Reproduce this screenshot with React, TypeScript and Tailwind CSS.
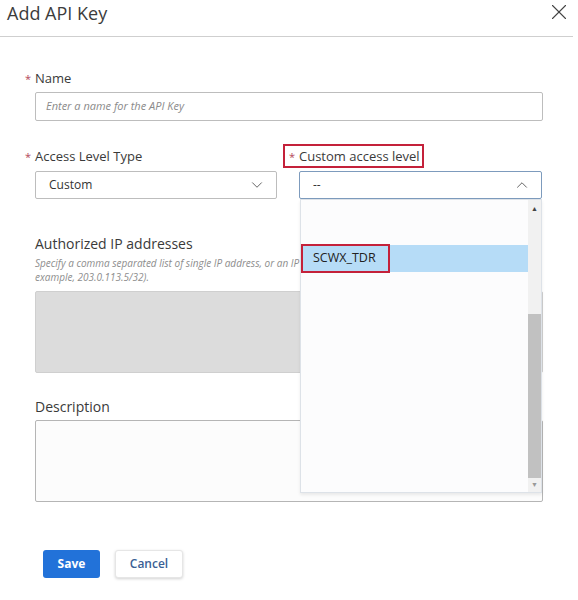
import { ChevronDown, ChevronUp, X } from "lucide-react";

const font = "font-['Open_Sans','Liberation_Sans',sans-serif]";

function Label({
    text,
    required,
}: {
    text: string;
    required?: boolean;
}) {
    return (
        <div className="relative h-[18px] text-[13px] leading-[18px] text-[#3a3a3a]">
            {required && (
                <span className="absolute left-[-10px] top-[1px] text-[11px] text-[#b3475a]">
                    *
                </span>
            )}
            {text}
        </div>
    );
}

export default function App() {
    return (
        <div className={`${font} relative h-[600px] w-[578px] overflow-hidden bg-white`}>

            {/* header */}
            <div className="mr-[5px] flex h-[37px] items-start justify-between border-b border-[#cfcfcf]">
                <h1 className="pl-[7px] pt-[1px] text-[18px] leading-[24px] text-[#3c3c3c]">
                    Add API Key
                </h1>
                <button className="mr-[1px] mt-[-1px] text-[#444]">
                    <X size={26} strokeWidth={1} />
                </button>
            </div>

            <div className="px-[35px] pt-[32px]">

                {/* name */}
                <Label text="Name" required />
                <div className="mt-[5px] flex h-[29px] items-center rounded-[2px] border border-[#bdbdbd] px-[10px] text-[11px] italic text-[#8a8a8a]">
                    Enter a name for the API Key
                </div>

                {/* access level row */}
                <div className="mt-[26px] grid grid-cols-[242px_243px] gap-[22px]">
                    <div>
                        <Label text="Access Level Type" required />
                        <div className="mt-[6px] flex h-[28px] items-center justify-between rounded-[2px] border border-[#bdbdbd] pl-[13px] pr-[10px] text-[12px] text-[#333]">
                            Custom
                            <ChevronDown size={18} strokeWidth={1.2} className="text-[#555]" />
                        </div>
                    </div>
                    <div className="relative">
                        <div className="absolute left-[-16px] top-[-3px] h-[24px] w-[141px] border-2 border-[#c4213a]" />
                        <Label text="Custom access level" required />
                        <div className="mt-[6px] flex h-[28px] items-center justify-between rounded-[2px] border border-[#7d9bbd] pl-[13px] pr-[10px] text-[12px] text-[#333]">
                            --
                            <ChevronUp size={18} strokeWidth={1.2} className="text-[#555]" />
                        </div>
                    </div>
                </div>

                {/* authorized ip */}
                <div className="mt-[36px] text-[14px] leading-[18px] text-[#3a3a3a]">
                    Authorized IP addresses
                </div>
                <p className="mt-[3px] whitespace-nowrap text-[10px] italic leading-[14px] text-[#8d8d8d]">
                    Specify a comma separated list of single IP address, or an IP address range in CIDR notation (for
                    <br />
                    example, 203.0.113.5/32).
                </p>
                <div className="mt-[7px] h-[82px] rounded-[2px] border border-[#cfcfcf] bg-[#dcdcdc]" />

                {/* description */}
                <div className="mt-[25px] text-[14px] leading-[18px] text-[#3a3a3a]">
                    Description
                </div>
                <div className="mt-[4px] h-[82px] rounded-[2px] border border-[#b5b5b5] bg-[#fcfcfc]" />

                {/* actions */}
                <div className="mt-[48px] flex gap-[15px] pl-[8px]">
                    <button className="h-[28px] w-[57px] rounded-[3px] bg-[#2272d9] text-[12px] font-bold text-white">
                        Save
                    </button>
                    <button className="h-[28px] w-[68px] rounded-[3px] border border-[#e6e6e6] bg-white text-[12px] font-semibold text-[#3a5f95] shadow-[0_1px_3px_rgba(0,0,0,0.18)]">
                        Cancel
                    </button>
                </div>
            </div>

            {/* open dropdown list, drawn over the form */}
            <div className="absolute left-[300px] top-[199px] flex h-[294px] w-[242px] border border-[#dde2e8] bg-[#fcfcfd] shadow-[0_2px_3px_rgba(0,0,0,0.08)]">
                <div className="flex-1 pt-[45px]">
                    <div className="relative flex h-[27px] items-center bg-[#b6dcf7] pl-[12px] text-[12.5px] text-[#222]">
                        <div className="absolute left-0 top-[-1px] h-[29px] w-[89px] border-2 border-[#c4213a]" />
                        SCWX_TDR
                    </div>
                </div>
                <div className="flex w-[13px] flex-col bg-[#f1f1f1]">
                    <div className="flex h-[18px] items-center justify-center text-[7px] text-[#444]">▲</div>
                    <div className="mt-[96px] h-[164px] bg-[#c1c1c1]" />
                    <div className="flex flex-1 items-center justify-center text-[7px] text-[#999]">▼</div>
                </div>
            </div>
        </div>
    );
}
